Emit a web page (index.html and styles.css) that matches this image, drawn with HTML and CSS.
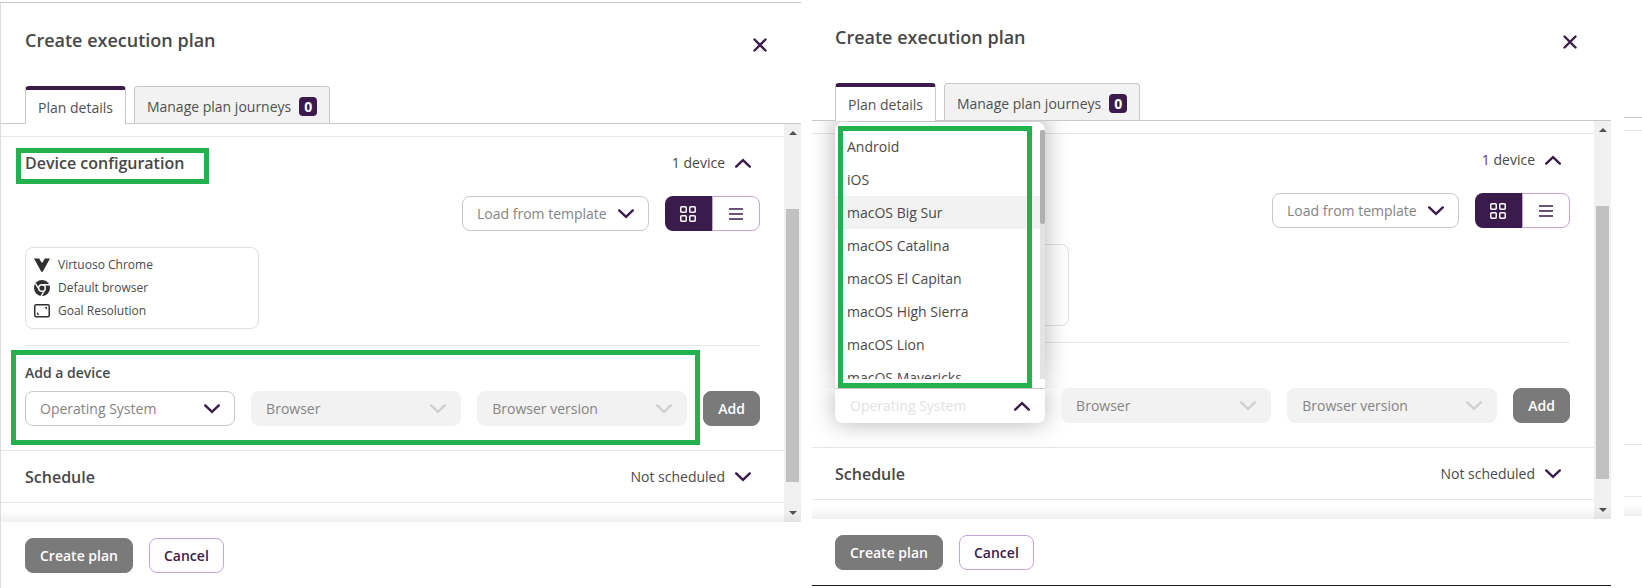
FILE: index.html
```
<!DOCTYPE html>
<html lang="en">
<head>
    <meta charset="UTF-8">
    <meta name="viewport" content="width=device-width, initial-scale=1.0">
    <title>Create execution plan</title>
    <link rel="stylesheet" href="styles.css">
</head>
<body>

    <!-- Shared icons -->
    <svg class="sprite" aria-hidden="true">
        <symbol id="icon-close" viewBox="0 0 14 14"><path d="M1.5 1.5l11 11M12.5 1.5l-11 11" fill="none" stroke="currentColor" stroke-width="2.4" stroke-linecap="round"/></symbol>
        <symbol id="icon-down" viewBox="0 0 16 10"><path d="M1.2 1.4L8 7.900l6.800-6.500" fill="none" stroke="currentColor" stroke-width="2.4" stroke-linecap="round"/></symbol>
        <symbol id="icon-up" viewBox="0 0 16 10"><path d="M1.200 8.600L8 2.100l6.800 6.500" fill="none" stroke="currentColor" stroke-width="2.4" stroke-linecap="round"/></symbol>
        <symbol id="icon-grid" viewBox="0 0 16 16"><g fill="none" stroke="currentColor" stroke-width="1.500"><rect x=".75" y=".75" width="5.500" height="5.500" rx="1"/><rect x="9.750" y=".75" width="5.500" height="5.500" rx="1"/><rect x=".75" y="9.750" width="5.500" height="5.500" rx="1"/><rect x="9.750" y="9.750" width="5.500" height="5.500" rx="1"/></g></symbol>
        <symbol id="icon-list" viewBox="0 0 14 12"><path d="M0 1h14M0 6h14M0 11h14" stroke="currentColor" stroke-width="1.500"/></symbol>
        <symbol id="icon-virtuoso" viewBox="0 0 16 16"><path d="M0 1.500h5.500l.4 1.500L8 6l2.100-3 .4-1.500H16L9 14.200Q8 15.800 7 14.200z" fill="currentColor"/></symbol>
        <symbol id="icon-chrome" viewBox="0 0 16 16"><circle cx="8" cy="8" r="8" fill="currentColor"/><circle cx="8" cy="8" r="3.300" fill="none" stroke="#fff" stroke-width="1.400"/><path d="M8 4.700h7.400M5.100 9.600L1.500 3.500M10.900 9.600L7.200 16" stroke="#fff" stroke-width="1.400"/></symbol>
        <symbol id="icon-resolution" viewBox="0 0 16 14"><rect x=".75" y=".75" width="14.500" height="12" rx="1.500" fill="none" stroke="currentColor" stroke-width="1.500"/><path d="M10.500 3H13v2.800zM3 8v2.800h2.600z" fill="currentColor"/></symbol>
    </svg>

    <section class="panel panel-closed">
        <header class="panel-header">
            <h1>Create execution plan</h1>
            <button class="close" aria-label="Close"><svg width="14" height="14"><use href="#icon-close"/></svg></button>
        </header>
        <nav class="tabs">
            <button class="tab active">Plan details</button>
            <button class="tab">Manage plan journeys <span class="badge">0</span></button>
        </nav>

        <div class="panel-body">
            <div class="content">
                <div class="section">
                    <div class="section-head">
                        <h2 class="marked">Device configuration</h2>
                        <button class="section-toggle">1 device <svg width="16" height="10"><use href="#icon-up"/></svg></button>
                    </div>
                    <div class="section-body">
                        <div class="toolbar">
                            <div class="field template">
                                <select aria-label="Load from template"><option>Load from template</option></select>
                                <svg width="16" height="10"><use href="#icon-down"/></svg>
                            </div>
                            <div class="view-switch">
                                <button class="selected" aria-label="Grid view"><svg width="16" height="16"><use href="#icon-grid"/></svg></button>
                                <button aria-label="List view"><svg width="14" height="12"><use href="#icon-list"/></svg></button>
                            </div>
                        </div>
                        <ul class="device-card">
                            <li><svg width="16" height="16"><use href="#icon-virtuoso"/></svg>Virtuoso Chrome</li>
                            <li><svg width="16" height="16"><use href="#icon-chrome"/></svg>Default browser</li>
                            <li><svg width="16" height="14"><use href="#icon-resolution"/></svg>Goal Resolution</li>
                        </ul>
                        <div class="add-device marked">
                            <h3>Add a device</h3>
                            <div class="device-row">
                                <div class="field">
                                    <select aria-label="Operating System"><option>Operating System</option></select>
                                    <svg width="16" height="10"><use href="#icon-down"/></svg>
                                </div>
                                <div class="field">
                                    <select aria-label="Browser" disabled><option>Browser</option></select>
                                    <svg width="16" height="10"><use href="#icon-down"/></svg>
                                </div>
                                <div class="field">
                                    <select aria-label="Browser version" disabled><option>Browser version</option></select>
                                    <svg width="16" height="10"><use href="#icon-down"/></svg>
                                </div>
                                <button class="btn btn-solid">Add</button>
                            </div>
                        </div>
                    </div>
                </div>
                <div class="section">
                    <div class="section-head">
                        <h2>Schedule</h2>
                        <button class="section-toggle">Not scheduled <svg width="16" height="10"><use href="#icon-down"/></svg></button>
                    </div>
                </div>
            </div>
            <div class="scrollbar">
                <span class="arrow arrow-up"></span>
                <div class="track"><div class="thumb"></div></div>
                <span class="arrow arrow-down"></span>
            </div>
        </div>

        <footer class="panel-footer">
            <button class="btn btn-solid">Create plan</button>
            <button class="btn btn-outline">Cancel</button>
        </footer>
    </section>

    <section class="panel panel-open">
        <header class="panel-header">
            <h1>Create execution plan</h1>
            <button class="close" aria-label="Close"><svg width="14" height="14"><use href="#icon-close"/></svg></button>
        </header>
        <nav class="tabs">
            <button class="tab active">Plan details</button>
            <button class="tab">Manage plan journeys <span class="badge">0</span></button>
        </nav>

        <div class="panel-body">
            <div class="content">
                <div class="section">
                    <div class="section-head">
                        <button class="section-toggle">1 device <svg width="16" height="10"><use href="#icon-up"/></svg></button>
                    </div>
                    <div class="section-body">
                        <div class="toolbar">
                            <div class="field template">
                                <select aria-label="Load from template"><option>Load from template</option></select>
                                <svg width="16" height="10"><use href="#icon-down"/></svg>
                            </div>
                            <div class="view-switch">
                                <button class="selected" aria-label="Grid view"><svg width="16" height="16"><use href="#icon-grid"/></svg></button>
                                <button aria-label="List view"><svg width="14" height="12"><use href="#icon-list"/></svg></button>
                            </div>
                        </div>
                        <ul class="device-card">
                            <li></li>
                            <li></li>
                            <li></li>
                        </ul>
                        <div class="add-device">
                            <h3></h3>
                            <div class="device-row">
                                <div class="field open">
                                    <button class="trigger" aria-haspopup="listbox" aria-expanded="true">Operating System</button>
                                    <svg width="16" height="10"><use href="#icon-up"/></svg>
                                    <div class="menu marked">
                                        <ul role="listbox" aria-label="Operating System">
                                            <li role="option">Android</li>
                                            <li role="option">iOS</li>
                                            <li role="option" class="hover">macOS Big Sur</li>
                                            <li role="option">macOS Catalina</li>
                                            <li role="option">macOS El Capitan</li>
                                            <li role="option">macOS High Sierra</li>
                                            <li role="option">macOS Lion</li>
                                            <li role="option">macOS Mavericks</li>
                                        </ul>
                                        <div class="menu-track"><div class="menu-thumb"></div></div>
                                    </div>
                                </div>
                                <div class="field">
                                    <select aria-label="Browser" disabled><option>Browser</option></select>
                                    <svg width="16" height="10"><use href="#icon-down"/></svg>
                                </div>
                                <div class="field">
                                    <select aria-label="Browser version" disabled><option>Browser version</option></select>
                                    <svg width="16" height="10"><use href="#icon-down"/></svg>
                                </div>
                                <button class="btn btn-solid">Add</button>
                            </div>
                        </div>
                    </div>
                </div>
                <div class="section">
                    <div class="section-head">
                        <h2>Schedule</h2>
                        <button class="section-toggle">Not scheduled <svg width="16" height="10"><use href="#icon-down"/></svg></button>
                    </div>
                </div>
            </div>
            <div class="scrollbar">
                <span class="arrow arrow-up"></span>
                <div class="track"><div class="thumb"></div></div>
                <span class="arrow arrow-down"></span>
            </div>
        </div>

        <footer class="panel-footer">
            <button class="btn btn-solid">Create plan</button>
            <button class="btn btn-outline">Cancel</button>
        </footer>
    </section>

    <!-- Edge of the next panel -->
    <div class="next-panel">
        <div class="next-top"></div>
        <div class="next-gap"></div>
        <div class="next-section"></div>
        <div class="next-schedule"></div>
        <div class="next-end"></div>
    </div>

</body>
</html>
```
FILE: styles.css
```
* {
    box-sizing: border-box;
}
body {
    margin: 0;
    display: flex;
    align-items: flex-start;
    background-color: #fff;
    color: #4a4a4a;
    font-family: "Open Sans", "Noto Sans", sans-serif;
    font-size: 14px;
    line-height: 20px;
}
h1, h2, h3, ul {
    margin: 0;
    padding: 0;
}
h1, h2, h3 {
    color: #484848;
    font-weight: 600;
}
ul {
    list-style: none;
}
button, select {
    margin: 0;
    padding: 0;
    border: none;
    background: none;
    color: inherit;
    font: inherit;
    cursor: pointer;
}
svg {
    display: block;
    flex: none;
}
.sprite {
    position: absolute;
    width: 0;
    height: 0;
}

/* Panel */
.panel {
    flex: 800 1 0;
    min-width: 0;
}
.panel-closed {
    margin-top: 2px;
    border-top: 1px solid #c8c8c8;
    border-left: 1px solid #dcdcdc;
}
.panel-open {
    flex-grow: 799;
    margin-left: 11px;
    border-bottom: 1px solid #1c1c1c;
}
.panel-header {
    display: flex;
    justify-content: space-between;
    align-items: flex-start;
    padding: 25px 34px 29px 24px;
}
.panel-open .panel-header,
.panel-open .tabs,
.panel-open .panel-footer {
    padding-left: 23px;
}
.panel-header h1 {
    font-size: 18px;
    line-height: 24px;
}
.close {
    height: 24px;
    margin-top: 5px;
    color: #3a1b4b;
}

/* Tabs */
.tabs {
    display: flex;
    gap: 8px;
    padding: 0 24px;
    border-bottom: 1px solid #c8c8c8;
}
.tab {
    display: flex;
    align-items: center;
    gap: 8px;
    height: 37px;
    padding: 3px 12px 0;
    border: 1px solid #c8c8c8;
    border-bottom: none;
    border-radius: 4px 4px 0 0;
    background-color: #f2f2f2;
    color: #505050;
}
.tab.active {
    height: 38px;
    margin-bottom: -1px;
    padding-top: 1px;
    border-top: 4px solid #3a1b4b;
    background-color: #fff;
}
.badge {
    width: 18px;
    border-radius: 4px;
    background-color: #3a1b4b;
    color: #fff;
    font-weight: 700;
    line-height: 19px;
    text-align: center;
}

/* Scrolling area */
.panel-body {
    display: flex;
    overflow: hidden;
    position: relative;
}
.panel-body::after {
    content: "";
    position: absolute;
    left: 0;
    right: 0;
    bottom: 0;
    height: 12px;
    background: linear-gradient(rgba(0, 0, 0, 0), rgba(0, 0, 0, 0.06));
}
.content {
    flex: 1;
    min-width: 0;
    padding: 12px 0 19px;
}
.section {
    border-top: 1px solid #e6e6e6;
}
.section:last-child {
    border-bottom: 1px solid #e6e6e6;
}
.section-head {
    display: flex;
    align-items: center;
    height: 51px;
    padding: 0 33px 0 24px;
}
.panel-open .section-head {
    padding-left: 23px;
}
.section-head h2 {
    font-size: 16px;
    line-height: 24px;
}
.section-toggle {
    display: flex;
    align-items: center;
    gap: 10px;
    margin-left: auto;
}
.section-toggle svg, .field svg {
    color: #3a1b4b;
}
.section-body {
    padding: 8px 24px 24px;
}
.panel-open .section-body {
    padding-left: 23px;
}
.scrollbar {
    display: flex;
    flex-direction: column;
    align-items: center;
    width: 17px;
    background-color: #f0f0f0;
}
.track {
    flex: 1;
    display: flex;
    padding: 68px 0 23px;
}
.thumb {
    width: 13px;
    background-color: #c1c1c1;
}
.arrow {
    height: 11px;
    border: 4px solid transparent;
}
.arrow-up {
    margin-bottom: 6px;
    border-top-width: 7px;
    border-bottom-color: #505050;
}
.arrow-down {
    margin-top: 6px;
    border-top-color: #505050;
    border-bottom-width: 7px;
}

/* Form controls */
.toolbar {
    display: flex;
    justify-content: flex-end;
    gap: 16px;
    margin-bottom: 16px;
}
.field {
    flex: 1;
    min-width: 0;
    height: 35px;
    position: relative;
}
.field.template {
    flex: none;
    width: 187px;
}
.field select, .trigger {
    appearance: none;
    display: block;
    width: 100%;
    height: 35px;
    padding: 0 32px 0 14px;
    border: 1px solid #c8c8c8;
    border-radius: 8px;
    background-color: #fff;
    color: #848484;
    text-align: left;
}
.field select:disabled {
    border-color: #f2f2f2;
    background-color: #f2f2f2;
    opacity: 1;
}
.field > svg {
    position: absolute;
    right: 15px;
    top: 13px;
    pointer-events: none;
}
.field select:disabled + svg {
    color: #d0d0d0;
}
.view-switch {
    display: flex;
    width: 95px;
    height: 35px;
    color: #3a1b4b;
}
.view-switch button {
    flex: 1;
    display: flex;
    align-items: center;
    justify-content: center;
    border: 1px solid #c3a5d8;
    border-radius: 0 8px 8px 0;
}
.view-switch .selected {
    border: none;
    border-radius: 8px 0 0 8px;
    background-color: #3a1b4b;
    color: #fff;
}
.device-card {
    width: 234px;
    margin-bottom: 16px;
    padding: 5px 8px 6px;
    border: 1px solid #e0e0e0;
    border-radius: 8px;
}
.device-card li {
    display: flex;
    align-items: center;
    gap: 8px;
    height: 23px;
    font-size: 12px;
}
.device-card svg {
    color: #303030;
}
.add-device {
    padding-top: 17px;
    border-top: 1px solid #e6e6e6;
}
.add-device h3 {
    height: 20px;
    margin-bottom: 8px;
    font-size: 14px;
}
.device-row {
    display: flex;
    gap: 16px;
}
.btn {
    height: 35px;
    padding: 0 14px;
    border: 1px solid #7a7a7a;
    border-radius: 8px;
    font-weight: 600;
}
.btn-solid {
    background-color: #7a7a7a;
    color: #fff;
}
.btn-outline {
    border-color: #c3a5d8;
    background-color: #fff;
    color: #3a1b4b;
}
.panel-footer {
    display: flex;
    gap: 16px;
    padding: 16px 24px 15px;
}

/* Opened dropdown */
.field.open {
    border-radius: 0 0 8px 8px;
    box-shadow: 0 0 24px rgba(0, 0, 0, 0.3);
}
.trigger {
    border: none;
    border-top: 1px solid #c8c8c8;
    border-radius: 0 0 8px 8px;
    padding-left: 15px;
    color: #e2e2e2;
}
.menu {
    position: absolute;
    left: 0;
    right: 0;
    bottom: 100%;
    display: flex;
    padding: 8px 0 9px;
    border-radius: 8px 8px 0 0;
    background-color: #fff;
    box-shadow: 0 -8px 24px rgba(0, 0, 0, 0.3);
    clip-path: inset(-40px -40px 0 -40px);
}
.menu ul {
    flex: 1;
    height: 249px;
    overflow: hidden;
}
.menu li {
    padding: 0 12px;
    line-height: 33px;
}
.menu li.hover {
    background-color: #f2f2f2;
}
.menu-track {
    width: 5px;
    background-color: #e3e3e3;
}
.menu-thumb {
    height: 94px;
    border-radius: 2px;
    background-color: #b0b0b0;
}

/* Green callout frames */
.marked {
    position: relative;
}
.menu.marked {
    position: absolute;
}
.marked::after {
    content: "";
    position: absolute;
    border: 5px solid #22b14c;
    pointer-events: none;
}
h2.marked::after {
    inset: -3px -25px -9px -9px;
}
.add-device.marked::after {
    inset: 4px 60px -19px -14px;
}
.menu.marked::after {
    inset: 4px 13px 0 3px;
}

/* Next panel */
.next-panel {
    flex: 18 1 0;
    margin-left: 13px;
}
.next-top {
    height: 118px;
    border-bottom: 1px solid #c8c8c8;
}
.next-gap {
    height: 13px;
    border-bottom: 1px solid #e6e6e6;
}
.next-section {
    height: 314px;
    border-bottom: 1px solid #e6e6e6;
}
.next-schedule {
    height: 52px;
    border-bottom: 1px solid #e6e6e6;
}
.next-end {
    height: 19px;
    background: linear-gradient(#fff 7px, #f0f0f0);
}
```
